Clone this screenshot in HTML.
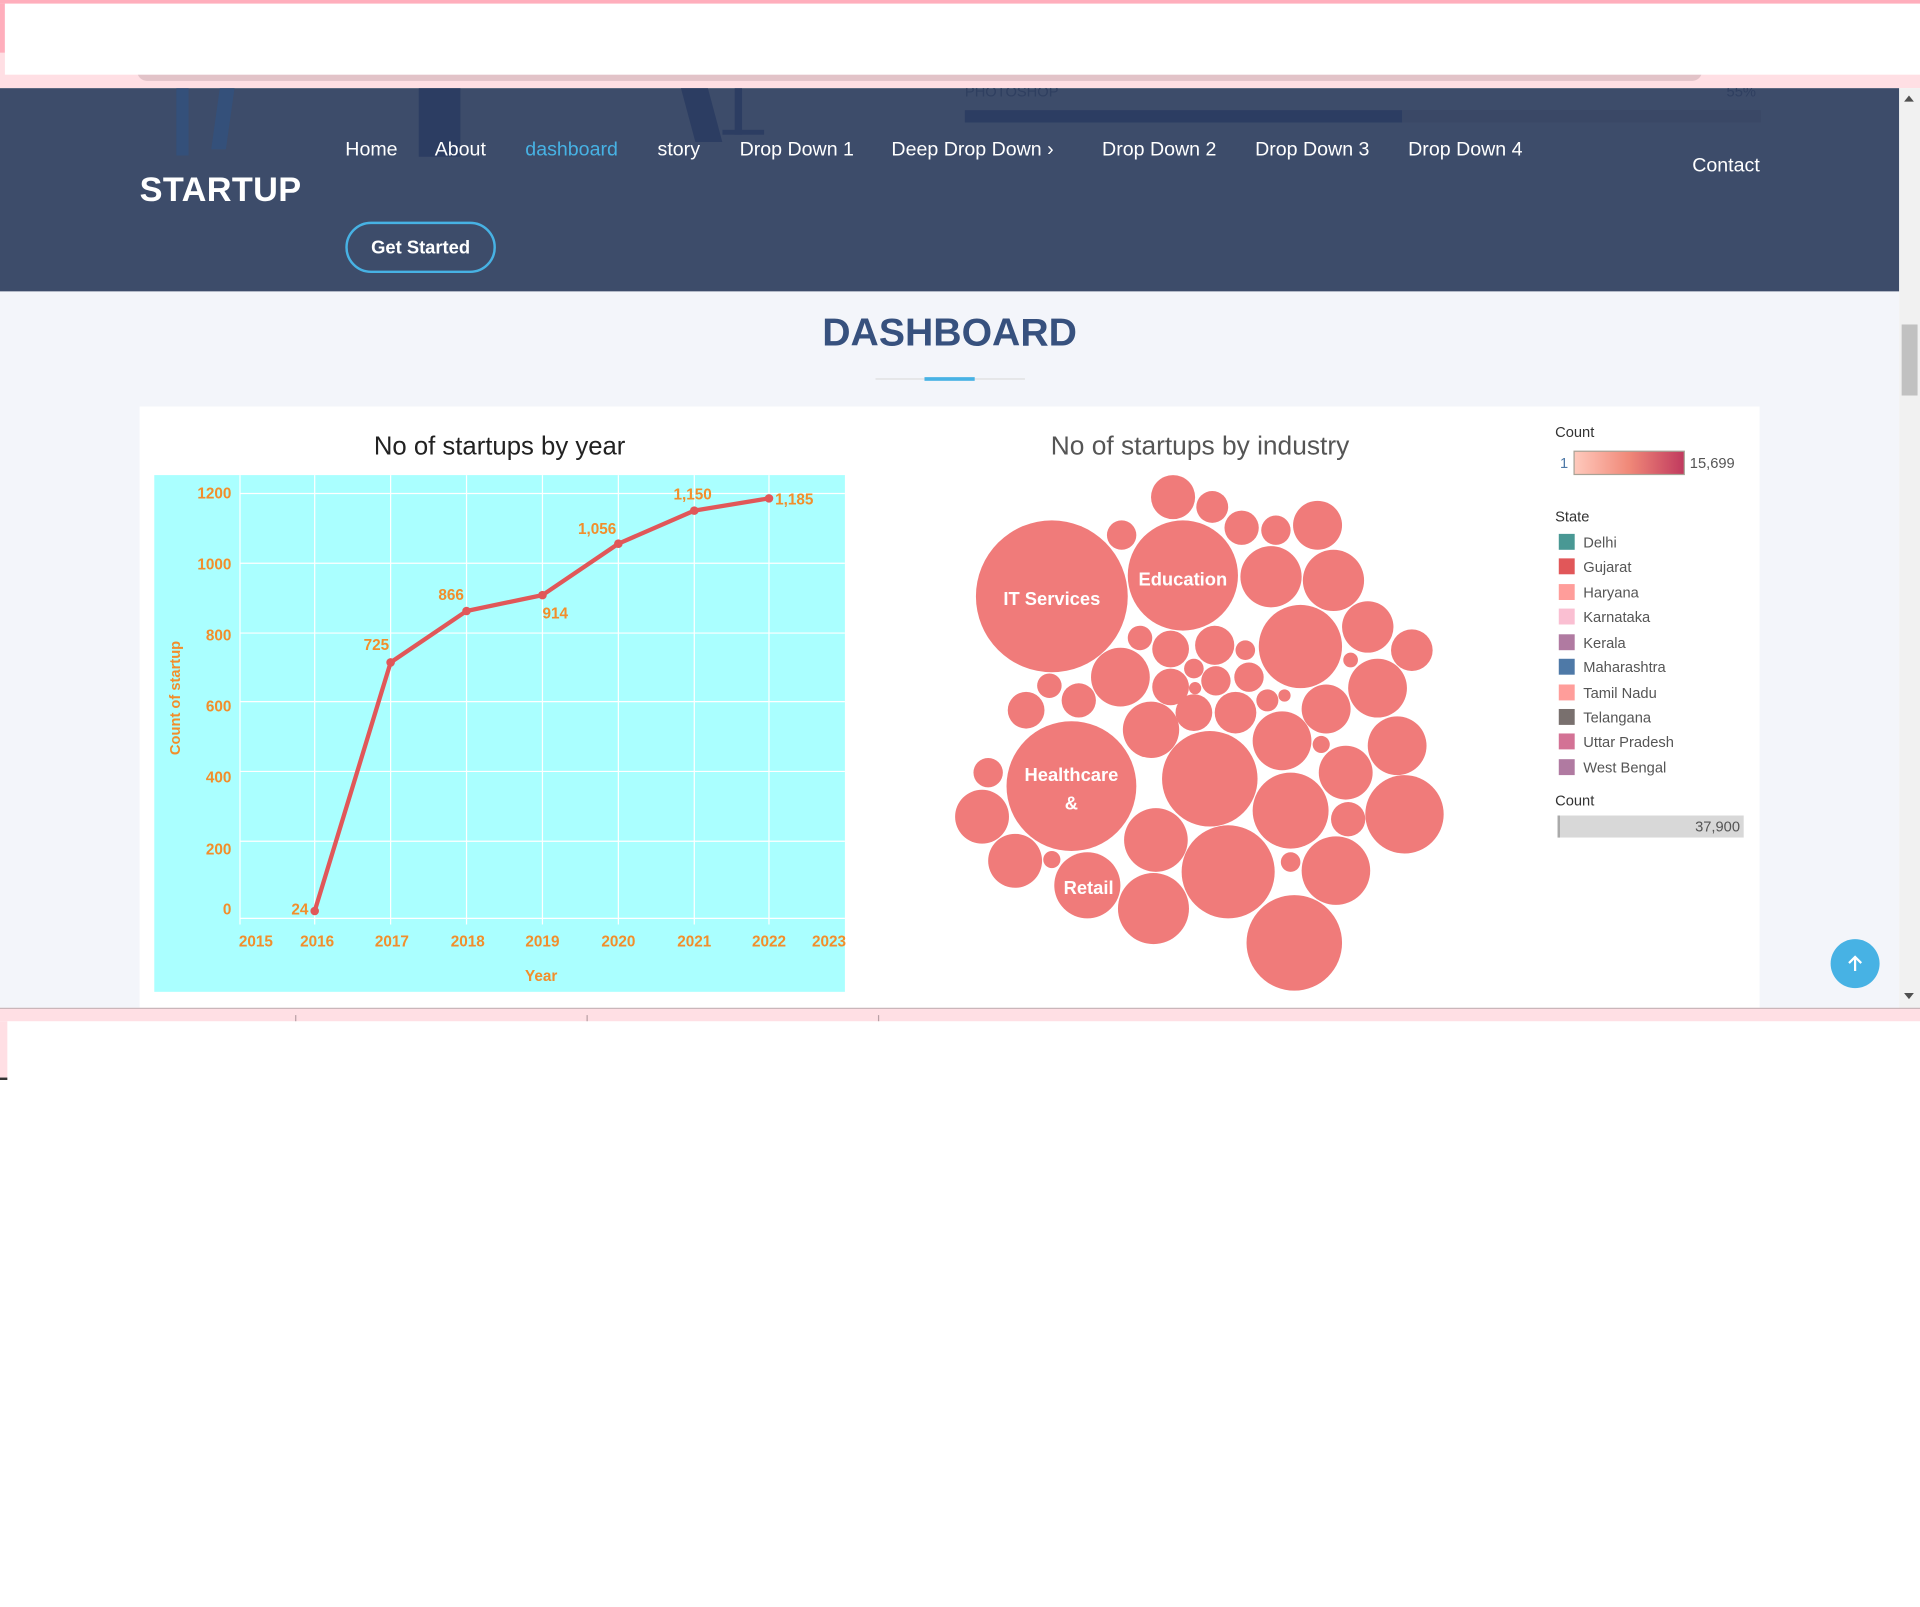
<!DOCTYPE html>
<html><head><meta charset="utf-8">
<style>
html,body{margin:0;padding:0;width:1920px;height:1606px;overflow:hidden;background:#fff;}
#w{position:absolute;left:0;top:0;width:1568px;height:1312px;transform:scale(1.22449);transform-origin:0 0;font-family:"Liberation Sans",sans-serif;}
.a{position:absolute;}
.nav{position:absolute;top:114px;color:#fff;font-size:16px;}
</style></head><body><div id="w">
<div class="a" style="left:0;top:0;width:1568px;height:72px;background:#ffdfe4;"></div>
<div class="a" style="left:0;top:0;width:1568px;height:3px;background:#ffaebc;"></div>
<div class="a" style="left:0;top:3px;width:4px;height:40px;background:#ffaebc;"></div>
<div class="a" style="left:112px;top:56px;width:1278px;height:10px;background:#e2c3c8;border-radius:0 0 8px 8px;"></div>
<div class="a" style="left:4px;top:3px;width:1564px;height:58px;background:#fff;"></div>
<div class="a" style="left:0;top:72px;width:1551px;height:166px;background:#3d4c6a;overflow:hidden;">
  <div class="a" style="left:144px;top:0;width:10px;height:55px;background:#34507a;"></div>
  <div class="a" style="left:176px;top:0;width:12px;height:50px;background:#34507a;transform:skewX(-8deg);"></div>
  <div class="a" style="left:342px;top:0;width:34px;height:56px;background:#2c3d62;"></div>
  <div class="a" style="left:562px;top:0;width:22px;height:44px;background:#2c3d62;transform:skewX(15deg);"></div>
  <div class="a" style="left:600px;top:0;width:6px;height:38px;background:#2c3d62;"></div>
  <div class="a" style="left:590px;top:34px;width:34px;height:4px;background:#2c3d62;"></div>
  <div class="a" style="left:788px;top:-4px;color:#2f3f60;font-size:12px;">PHOTOSHOP</div>
  <div class="a" style="left:1410px;top:-4px;color:#2f3f60;font-size:12px;">55%</div>
  <div class="a" style="left:788px;top:18px;width:650px;height:10px;background:#3a4866;"></div>
  <div class="a" style="left:788px;top:18px;width:357px;height:10px;background:#2c3d62;"></div>
</div>
<div class="a" style="left:114px;top:139px;color:#fff;font-size:28px;font-weight:bold;letter-spacing:0.3px;">STARTUP</div>
<div class="nav" style="left:282px;">Home</div>
<div class="nav" style="left:355px;">About</div>
<div class="nav" style="left:429px;color:#47b2e4;">dashboard</div>
<div class="nav" style="left:537px;">story</div>
<div class="nav" style="left:604px;">Drop Down 1</div>
<div class="nav" style="left:728px;">Deep Drop Down &#8250;</div>
<div class="nav" style="left:900px;">Drop Down 2</div>
<div class="nav" style="left:1025px;">Drop Down 3</div>
<div class="nav" style="left:1150px;">Drop Down 4</div>
<div class="nav" style="left:1382px;top:127px;">Contact</div>
<div class="a" style="left:282px;top:181px;width:119px;height:38px;border:2px solid #47b2e4;border-radius:22px;color:#fff;font-size:15px;font-weight:bold;text-align:center;line-height:40px;">Get Started</div>
<div class="a" style="left:0;top:238px;width:1551px;height:585px;background:#f3f5fa;"></div>
<div class="a" style="left:0;top:253px;width:1551px;text-align:center;color:#37517e;font-size:32px;font-weight:bold;">DASHBOARD</div>
<div class="a" style="left:715px;top:309px;width:122px;height:1px;background:#ddd;"></div>
<div class="a" style="left:755px;top:308px;width:41px;height:3px;background:#47b2e4;"></div>
<div class="a" style="left:1551px;top:72px;width:17px;height:752px;background:#f1f1f1;"></div>
<div class="a" style="left:1553px;top:265px;width:13px;height:58px;background:#c1c1c1;"></div>
<div class="a" style="left:1555px;top:78px;width:0;height:0;border-left:4px solid transparent;border-right:4px solid transparent;border-bottom:5px solid #505050;"></div>
<div class="a" style="left:1555px;top:811px;width:0;height:0;border-left:4px solid transparent;border-right:4px solid transparent;border-top:5px solid #505050;"></div>
<div class="a" style="left:114px;top:332px;width:1323px;height:491px;background:#fff;"></div>
<div class="a" style="left:126px;top:353px;width:564px;text-align:center;color:#222;font-size:21px;">No of startups by year</div>
<div class="a" style="left:126px;top:388px;width:564px;height:422px;background:#aaffff;"></div>
<svg class="a" style="left:0;top:0;" width="1568" height="830">
<g stroke="#fff" stroke-width="1">
<line x1="196" y1="403" x2="690" y2="403"/><line x1="196" y1="460" x2="690" y2="460"/><line x1="196" y1="517" x2="690" y2="517"/><line x1="196" y1="573" x2="690" y2="573"/><line x1="196" y1="630" x2="690" y2="630"/><line x1="196" y1="687" x2="690" y2="687"/><line x1="196" y1="750" x2="690" y2="750"/>
<line x1="196" y1="388" x2="196" y2="755"/><line x1="257" y1="388" x2="257" y2="755"/><line x1="319" y1="388" x2="319" y2="755"/><line x1="381" y1="388" x2="381" y2="755"/><line x1="443" y1="388" x2="443" y2="755"/><line x1="505" y1="388" x2="505" y2="755"/><line x1="567" y1="388" x2="567" y2="755"/><line x1="628" y1="388" x2="628" y2="755"/>
</g>
<polyline points="257,744 319,541 381,499 443,486 505,444 567,417 628,407" fill="none" stroke="#e15759" stroke-width="3.5" stroke-linejoin="round"/>
<g fill="#e15759"><circle cx="257" cy="744" r="3.5"/><circle cx="319" cy="541" r="3.5"/><circle cx="381" cy="499" r="3.5"/><circle cx="443" cy="486" r="3.5"/><circle cx="505" cy="444" r="3.5"/><circle cx="567" cy="417" r="3.5"/><circle cx="628" cy="407" r="3.5"/></g>
<g fill="#f28e2b" font-family="Liberation Sans,sans-serif" font-size="12.5" font-weight="bold">
<text x="189" y="407" text-anchor="end">1200</text><text x="189" y="465" text-anchor="end">1000</text><text x="189" y="523" text-anchor="end">800</text><text x="189" y="581" text-anchor="end">600</text><text x="189" y="639" text-anchor="end">400</text><text x="189" y="698" text-anchor="end">200</text><text x="189" y="747" text-anchor="end">0</text>
<text x="209" y="773" text-anchor="middle">2015</text><text x="259" y="773" text-anchor="middle">2016</text><text x="320" y="773" text-anchor="middle">2017</text><text x="382" y="773" text-anchor="middle">2018</text><text x="443" y="773" text-anchor="middle">2019</text><text x="505" y="773" text-anchor="middle">2020</text><text x="567" y="773" text-anchor="middle">2021</text><text x="628" y="773" text-anchor="middle">2022</text><text x="677" y="773" text-anchor="middle">2023</text>
<text x="442" y="801" text-anchor="middle">Year</text>
<text transform="translate(147,570) rotate(-90)" text-anchor="middle" font-size="12">Count of startup</text>
<text x="238" y="747">24</text><text x="297" y="531">725</text><text x="358" y="490">866</text><text x="443" y="505">914</text><text x="472" y="436">1,056</text><text x="550" y="408">1,150</text><text x="633" y="412">1,185</text>
</g>
<g fill="#f07b7a">
<circle cx="859" cy="487" r="62"/><circle cx="966" cy="470" r="45"/><circle cx="875" cy="642" r="53"/><circle cx="888" cy="723" r="27"/>
<circle cx="958" cy="406" r="18"/><circle cx="990" cy="414" r="13"/><circle cx="916" cy="437" r="12"/><circle cx="1014" cy="431" r="14"/><circle cx="1042" cy="433" r="12"/><circle cx="1076" cy="429" r="20"/><circle cx="1038" cy="471" r="25"/><circle cx="1089" cy="474" r="25"/><circle cx="1062" cy="528" r="34"/><circle cx="1117" cy="512" r="21"/><circle cx="1153" cy="531" r="17"/><circle cx="1125" cy="562" r="24"/><circle cx="1103" cy="539" r="6"/><circle cx="931" cy="521" r="10"/><circle cx="956" cy="530" r="15"/><circle cx="992" cy="527" r="16"/><circle cx="1017" cy="531" r="8"/><circle cx="915" cy="553" r="24"/><circle cx="857" cy="560" r="10"/><circle cx="838" cy="580" r="15"/><circle cx="881" cy="572" r="14"/><circle cx="956" cy="561" r="15"/><circle cx="975" cy="546" r="8"/><circle cx="993" cy="556" r="12"/><circle cx="1020" cy="553" r="12"/><circle cx="976" cy="562" r="5"/><circle cx="940" cy="596" r="23"/><circle cx="975" cy="582" r="15"/><circle cx="1009" cy="582" r="17"/><circle cx="1035" cy="572" r="9"/><circle cx="1049" cy="568" r="5"/><circle cx="1083" cy="579" r="20"/><circle cx="1047" cy="605" r="24"/><circle cx="1079" cy="608" r="7"/><circle cx="1099" cy="631" r="22"/><circle cx="1141" cy="609" r="24"/><circle cx="988" cy="636" r="39"/><circle cx="1054" cy="662" r="31"/><circle cx="1101" cy="669" r="14"/><circle cx="1147" cy="665" r="32"/><circle cx="807" cy="631" r="12"/><circle cx="802" cy="667" r="22"/><circle cx="829" cy="703" r="22"/><circle cx="859" cy="702" r="7"/><circle cx="944" cy="686" r="26"/><circle cx="1003" cy="712" r="38"/><circle cx="1054" cy="704" r="8"/><circle cx="1091" cy="711" r="28"/><circle cx="942" cy="742" r="29"/><circle cx="1057" cy="770" r="39"/>
</g>
<g fill="#fff" font-family="Liberation Sans,sans-serif" font-size="15" font-weight="bold" text-anchor="middle">
<text x="859" y="494">IT Services</text><text x="966" y="478">Education</text><text x="875" y="638">Healthcare</text><text x="875" y="661">&amp;</text><text x="889" y="730">Retail</text>
</g>
<defs><linearGradient id="g"><stop offset="0" stop-color="#ffcabd"/><stop offset="0.5" stop-color="#f08878"/><stop offset="1" stop-color="#c0395e"/></linearGradient></defs>
<rect x="1285.5" y="368.5" width="90" height="19" fill="url(#g)" stroke="#a8a296"/>
<rect x="1272" y="666" width="152" height="18" fill="#d8d8d8"/><rect x="1272" y="666" width="2" height="18" fill="#aaa"/>
<g font-family="Liberation Sans,sans-serif" font-size="12" fill="#333">
<text x="1270" y="357">Count</text><text x="1270" y="426">State</text><text x="1270" y="658">Count</text>
</g>
<g font-family="Liberation Sans,sans-serif" font-size="12" fill="#555">
<text x="1274" y="382" fill="#4e79a7">1</text><text x="1380" y="382">15,699</text><text x="1421" y="679" text-anchor="end">37,900</text>
<rect x="1273" y="436" width="13" height="13" fill="#499894"/><text x="1293" y="447">Delhi</text>
<rect x="1273" y="456" width="13" height="13" fill="#e15759"/><text x="1293" y="467">Gujarat</text>
<rect x="1273" y="477" width="13" height="13" fill="#ff9d9a"/><text x="1293" y="488">Haryana</text>
<rect x="1273" y="497" width="13" height="13" fill="#fabfd2"/><text x="1293" y="508">Karnataka</text>
<rect x="1273" y="518" width="13" height="13" fill="#b07aa1"/><text x="1293" y="529">Kerala</text>
<rect x="1273" y="538" width="13" height="13" fill="#4e79a7"/><text x="1293" y="549">Maharashtra</text>
<rect x="1273" y="559" width="13" height="13" fill="#ff9d9a"/><text x="1293" y="570">Tamil Nadu</text>
<rect x="1273" y="579" width="13" height="13" fill="#79706e"/><text x="1293" y="590">Telangana</text>
<rect x="1273" y="599" width="13" height="13" fill="#d37295"/><text x="1293" y="610">Uttar Pradesh</text>
<rect x="1273" y="620" width="13" height="13" fill="#b07aa1"/><text x="1293" y="631">West Bengal</text>
</g>
</svg>
<div class="a" style="left:980px;top:352px;width:0;"><div style="position:absolute;left:-200px;width:400px;text-align:center;color:#555;font-size:21.5px;">No of startups by industry</div></div>
<div class="a" style="left:1495px;top:767px;width:40px;height:40px;border-radius:50%;background:#47b2e4;"></div>
<svg class="a" style="left:1505px;top:777px;" width="20" height="20"><path d="M10 16V5M5 9.5L10 4.5 15 9.5" stroke="#fff" stroke-width="1.8" fill="none"/></svg>
<div class="a" style="left:0;top:823px;width:1568px;height:1px;background:#c9b4b8;"></div>
<div class="a" style="left:0;top:824px;width:1568px;height:10px;background:#ffdfe4;"></div>
<div class="a" style="left:0;top:834px;width:6px;height:46px;background:#ffdfe4;"></div>
<div class="a" style="left:241px;top:829px;width:1px;height:5px;background:#b9a0a5;"></div>
<div class="a" style="left:479px;top:829px;width:1px;height:5px;background:#b9a0a5;"></div>
<div class="a" style="left:717px;top:829px;width:1px;height:5px;background:#b9a0a5;"></div>
<div class="a" style="left:0;top:880px;width:6px;height:2px;background:#333;"></div>
</div></body></html>
